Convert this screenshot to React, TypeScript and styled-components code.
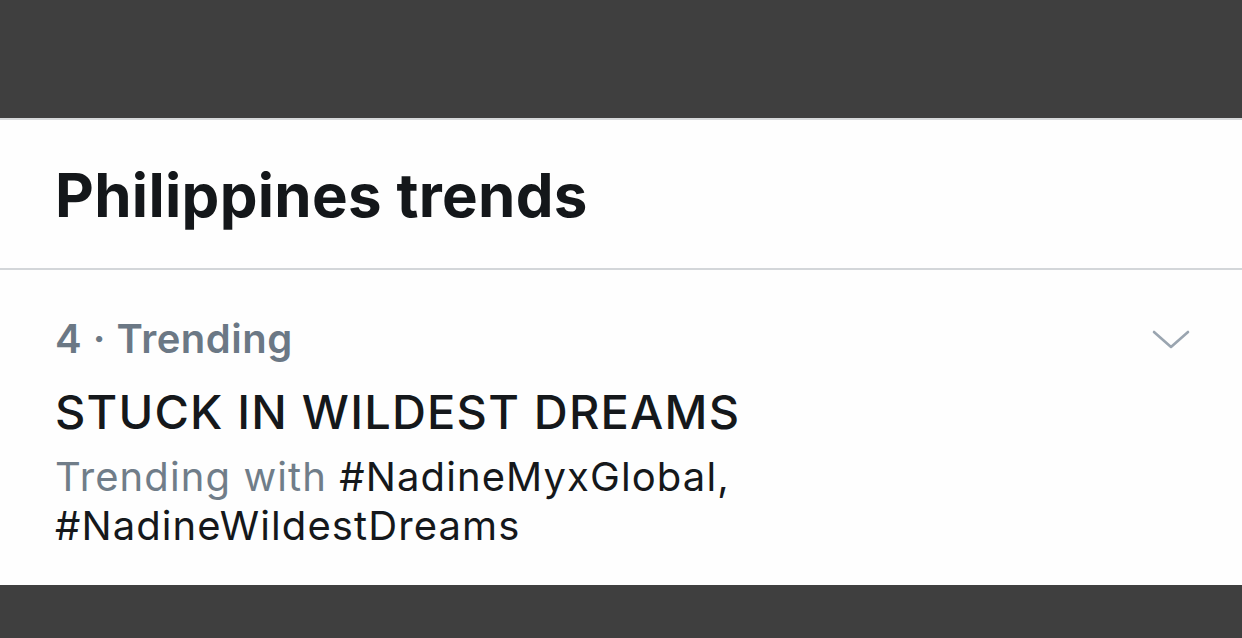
import React from "react";
import styled, { createGlobalStyle } from "styled-components";

const Global = createGlobalStyle`
  html, body { margin: 0; padding: 0; background: #3f3f3f; }
  body { font-family: Inter, "Liberation Sans", Arial, sans-serif; }
`;

const Page = styled.div`
  width: 1242px;
  height: 638px;
  display: flex;
  flex-direction: column;
  background: #3f3f3f;
  overflow: hidden;
`;

const TopBand = styled.div`
  height: 118px;
  flex-shrink: 0;
`;

const Panel = styled.section`
  background: #fefefe;
  border-top: 2px solid #d6d8da;
  display: flex;
  flex-direction: column;
  height: 465px;
`;

const Header = styled.header`
  height: 150px;
  box-sizing: border-box;
  display: flex;
  align-items: center;
  padding: 2px 55px 0;
  border-bottom: 2px solid #d3d6d9;
`;

const Title = styled.h1`
  margin: 0;
  font-family: Inter, "Liberation Sans", Arial, sans-serif;
  font-weight: 700;
  font-size: 60px;
  letter-spacing: 0.3px;
  color: #14171a;
`;

const Trend = styled.div`
  display: flex;
  justify-content: space-between;
  padding: 45px 52px 0 55px;
`;

const TrendBody = styled.div`
  display: flex;
  flex-direction: column;
`;

const Meta = styled.div`
  font-size: 40px;
  line-height: 48px;
  color: #6b7885;
  font-weight: 600;
  letter-spacing: 0.5px;
`;

const Name = styled.div`
  margin-top: 25px;
  font-size: 47px;
  line-height: 48px;
  font-weight: 500;
  letter-spacing: 1.2px;
  color: #15181b;
`;

const Context = styled.div`
  margin-top: 16px;
  font-size: 40px;
  line-height: 49px;
  letter-spacing: 1.1px;
  color: #15181b;
  width: 720px;
`;

const Muted = styled.span`
  color: #707d89;
`;

const Chevron = styled.svg`
  width: 38px;
  height: 22px;
  margin-top: 14px;
`;

export default function App() {
  return (
    <>
      <Global />
      <Page>
        <TopBand />
        <Panel>
          <Header>
            <Title>Philippines trends</Title>
          </Header>
          <Trend>
            <TrendBody>
              <Meta>4 · Trending</Meta>
              <Name>STUCK IN WILDEST DREAMS</Name>
              <Context>
                <Muted>Trending with</Muted> #NadineMyxGlobal, #NadineWildestDreams
              </Context>
            </TrendBody>
            <Chevron viewBox="0 0 38 22">
              <path d="M2 3 L19 18 L36 3" fill="none" stroke="#9aa5b0" strokeWidth="2.6" strokeLinecap="round" strokeLinejoin="round" />
            </Chevron>
          </Trend>
        </Panel>
      </Page>
    </>
  );
}
